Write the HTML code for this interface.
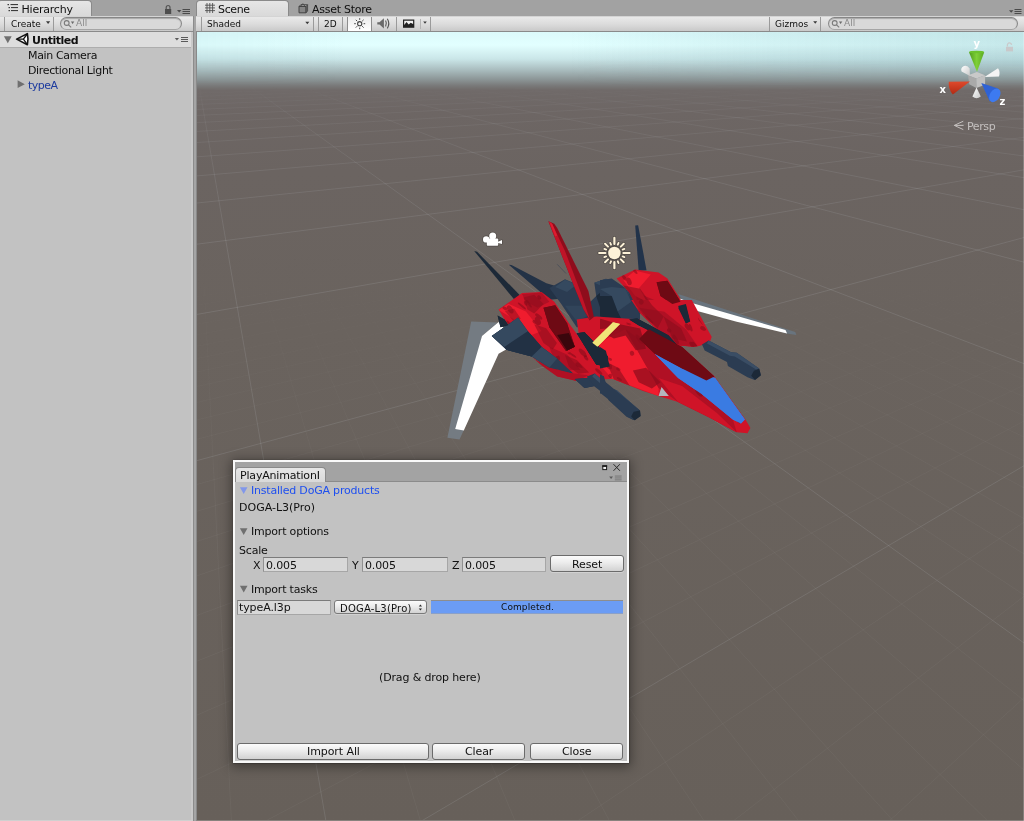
<!DOCTYPE html>
<html><head><meta charset="utf-8"><title>Unity</title>
<style>
*{box-sizing:border-box;margin:0;padding:0}
html,body{width:1024px;height:821px;overflow:hidden;background:#a2a2a2;font-family:"DejaVu Sans","Liberation Sans",sans-serif;font-size:11px;color:#101010}
.abs{position:absolute}
#root{position:absolute;left:0;top:0;width:1024px;height:821px;overflow:hidden;background:#a2a2a2;will-change:transform}
.tab{position:absolute;top:1px;height:16px;background:linear-gradient(#e6e6e6,#d9d9d9);border:1px solid #8a8a8a;border-bottom:none;border-radius:4px 4px 0 0}
.tbar{position:absolute;top:16px;height:16px;background:linear-gradient(#e9e9e9 0,#dcdcdc 50%,#c9c9c9 100%);border-top:1px solid #d4d4d4;border-bottom:1px solid #8a8a8a}
.t{position:absolute;white-space:nowrap;line-height:16px;font-size:11px;letter-spacing:-0.35px}
.s{position:absolute;white-space:nowrap;line-height:12px;font-size:9px;letter-spacing:0}
.sep{position:absolute;top:17px;height:14px;width:1px;background:#9a9a9a}
.search{position:absolute;top:17px;height:13px;border:1px solid #868686;border-bottom-color:#a5a5a5;border-radius:7px;background:#d9d9d9;box-shadow:inset 0 1px 1px #a8a8a8}
.btn{position:absolute;border:1px solid #6b6b6b;border-radius:3px;background:linear-gradient(#fbfbfb 0,#ececec 45%,#d2d2d2 100%);box-shadow:0 1px 0 rgba(255,255,255,.25)}
.fld{position:absolute;height:15px;border:1px solid #a6a6a6;border-top-color:#7b7b7b;border-left-color:#909090;background:#d8d8d8}
</style></head><body><div id="root">

<!-- ===== Hierarchy panel ===== -->
<div class="abs" style="left:0;top:32px;width:193px;height:789px;background:#c2c2c2"></div>
<div class="tab" style="left:-1px;top:0;width:93px;border-top-left-radius:2px"></div>
<span class="t" style="left:21.5px;top:2px;letter-spacing:-0.22px">Hierarchy</span>
<div class="tbar" style="left:0;width:193px"></div>
<div class="sep" style="left:4px"></div><div class="sep" style="left:53px"></div>
<span class="s" style="left:11px;top:18px">Create</span>
<div class="search" style="left:60px;width:122px"></div>
<span class="s" style="left:76px;top:17px;color:#8a8a8a">All</span>
<div class="abs" style="left:0;top:32px;width:193px;height:16px;background:#dddddd;border-bottom:1px solid #adadad"></div>
<span class="t" style="left:32px;top:33px;font-weight:bold;letter-spacing:-0.5px">Untitled</span>
<span class="t" style="left:28px;top:48px">Main Camera</span>
<span class="t" style="left:28px;top:63px">Directional Light</span>
<span class="t" style="left:28px;top:78px;color:#1c3a9e;letter-spacing:-0.5px">typeA</span>

<!-- divider -->
<div class="abs" style="left:191px;top:32px;width:2px;height:789px;background:#c9c9c9"></div>
<div class="abs" style="left:193px;top:0;width:4px;height:821px;background:linear-gradient(90deg,#8c8c8c 0,#8c8c8c 1px,#a5a5a5 1px,#a5a5a5 3px,#898989 3px)"></div>
<div class="abs" style="left:193px;top:0;width:4px;height:16px;background:#a2a2a2"></div>

<!-- ===== Scene panel ===== -->
<div class="tab" style="left:196px;top:0;width:93px"></div>
<span class="t" style="left:218px;top:2px">Scene</span>
<span class="t" style="left:312px;top:2px;letter-spacing:-0.25px">Asset Store</span>
<div class="tbar" style="left:196px;width:828px"></div>
<div class="abs" style="left:348px;top:17px;width:23px;height:14px;background:linear-gradient(#ececec,#ffffff)"></div>
<div class="sep" style="left:201px"></div><div class="sep" style="left:313px"></div><div class="sep" style="left:318px"></div><div class="sep" style="left:342px"></div><div class="sep" style="left:347px;background:#8d8d8d"></div><div class="sep" style="left:371px;background:#8d8d8d"></div><div class="sep" style="left:396px"></div><div class="sep" style="left:420px;background:#b4b4b4;top:19px;height:10px"></div><div class="sep" style="left:430px"></div><div class="sep" style="left:769px"></div><div class="sep" style="left:820px"></div>
<span class="s" style="left:207px;top:18px">Shaded</span>
<span class="s" style="left:324px;top:18px">2D</span>
<span class="s" style="left:775px;top:18px">Gizmos</span>
<div class="search" style="left:828px;width:190px"></div>
<span class="s" style="left:844px;top:17px;color:#8a8a8a">All</span>

<div class="abs" id="scene" style="left:197px;top:32px;width:827px;height:789px;background:linear-gradient(#dcfafb 0,#e2ffff 13px,#cae6e8 27px,#a9bcbe 38px,#8d9798 47px,#787878 54px,#706a69 58px,#6d6664 80px,#6b6461 140px,#6a635e 300px,#67605a 100%)"></div>

<div class="abs" style="left:197px;top:32px;width:827px;height:54px;background:linear-gradient(90deg,rgba(120,170,178,.08) 0,rgba(120,170,178,0) 18%,rgba(120,170,178,0) 45%,rgba(120,170,178,.14) 70%,rgba(120,170,178,.26) 100%);-webkit-mask-image:linear-gradient(#000 0,#000 55%,transparent 100%);mask-image:linear-gradient(#000 0,#000 55%,transparent 100%)"></div>
<svg class="abs" style="left:0;top:0" width="1024" height="821" viewBox="0 0 1024 821">
<defs><linearGradient id="gmg" x1="0" y1="0" x2="0" y2="1"><stop offset="0" stop-color="#000"/><stop offset="0.068" stop-color="#000"/><stop offset="0.1" stop-color="#777"/><stop offset="0.18" stop-color="#ccc"/><stop offset="0.3" stop-color="#fff"/><stop offset="1" stop-color="#fff"/></linearGradient>
<mask id="gm" maskUnits="userSpaceOnUse" x="196" y="32" width="828" height="789"><rect x="196" y="32" width="828" height="789" fill="url(#gmg)"/></mask><linearGradient id="gmg2" x1="0" y1="0" x2="0" y2="1"><stop offset="0" stop-color="#000"/><stop offset="0.27" stop-color="#000"/><stop offset="0.6" stop-color="#fff"/><stop offset="1" stop-color="#fff"/></linearGradient><mask id="gm2" maskUnits="userSpaceOnUse" x="196" y="32" width="828" height="789"><rect x="196" y="32" width="828" height="789" fill="url(#gmg2)"/></mask></defs>
<path d="M201.4 230.0 L231.4 821.0 M246.5 230.0 L420.5 821.0 M269.1 230.0 L515.1 821.0 M291.7 230.0 L609.6 821.0 M314.3 230.0 L704.2 821.0 M336.8 230.0 L798.8 821.0 M359.4 230.0 L893.3 821.0 M382.0 230.0 L987.8 821.0 M404.5 230.0 L1024.0 770.1 M427.1 230.0 L1024.0 700.5 M472.2 230.0 L1024.0 594.9 M494.8 230.0 L1024.0 553.9 M517.4 230.0 L1024.0 518.6 M539.9 230.0 L1024.0 487.8 M562.5 230.0 L1024.0 460.8 M585.0 230.0 L1024.0 437.0 M607.6 230.0 L1024.0 415.7 M630.2 230.0 L1024.0 396.6 M652.7 230.0 L1024.0 379.3 M697.8 230.0 L1024.0 349.5 M720.4 230.0 L1024.0 336.5 M742.9 230.0 L1024.0 324.5 M765.5 230.0 L1024.0 313.5 M788.0 230.0 L1024.0 303.4 M810.6 230.0 L1024.0 293.9 M833.1 230.0 L1024.0 285.2 M855.7 230.0 L1024.0 277.0 M878.2 230.0 L1024.0 269.4 M923.3 230.0 L1024.0 255.5 M945.8 230.0 L1024.0 249.2 M968.4 230.0 L1024.0 243.3 M990.9 230.0 L1024.0 237.7 M1013.5 230.0 L1024.0 232.4 M197.0 234.4 L232.4 230.0 M197.0 239.2 L269.7 230.0 M197.0 249.6 L344.2 230.0 M197.0 255.2 L381.5 230.0 M197.0 261.1 L418.8 230.0 M197.0 267.4 L456.0 230.0 M197.0 274.1 L493.3 230.0 M197.0 281.1 L530.5 230.0 M197.0 288.7 L567.8 230.0 M197.0 296.7 L605.0 230.0 M197.0 305.2 L642.3 230.0 M197.0 324.2 L716.7 230.0 M197.0 334.8 L754.0 230.0 M197.0 346.2 L791.2 230.0 M197.0 358.5 L828.4 230.0 M197.0 371.9 L865.7 230.0 M197.0 386.5 L902.9 230.0 M197.0 402.4 L940.1 230.0 M197.0 419.9 L977.3 230.0 M197.0 439.2 L1014.5 230.0 M197.0 484.5 L1024.0 248.5 M197.0 511.2 L1024.0 260.9 M197.0 541.4 L1024.0 274.9 M197.0 575.8 L1024.0 290.8 M197.0 615.4 L1024.0 309.1 M197.0 661.2 L1024.0 330.4 M197.0 715.1 L1024.0 355.3 M197.0 779.3 L1024.0 385.1 M265.5 821.0 L1024.0 421.1 M577.4 821.0 L1024.0 522.2 M733.3 821.0 L1024.0 596.3 M889.2 821.0 L1024.0 697.7" stroke="#e4ecf2" stroke-opacity="0.045" stroke-width="1" fill="none" mask="url(#gm2)"/><path d="M197.0 85.4 L249.8 84.0 M197.0 87.7 L329.3 84.0 M197.0 90.2 L408.8 84.0 M197.0 93.1 L488.2 84.0 M197.0 96.4 L567.5 84.0 M197.0 100.1 L646.8 84.0 M197.0 104.4 L726.0 84.0 M197.0 109.4 L805.1 84.0 M197.0 115.4 L884.1 84.0 M197.0 122.6 L963.1 84.0 M197.0 131.4 L1024.0 85.0 M197.0 142.5 L1024.0 90.1 M197.0 156.8 L1024.0 96.8 M198.8 84.0 L325.9 821.0 M197.0 175.9 L1024.0 105.6 M246.7 84.0 L1024.0 643.0 M197.0 203.0 L1024.0 118.2 M294.5 84.0 L1024.0 363.7 M197.0 244.2 L1024.0 137.3 M342.4 84.0 L1024.0 262.2 M197.0 314.4 L1024.0 169.8 M390.2 84.0 L1024.0 209.7 M197.0 460.6 L1024.0 237.5 M438.0 84.0 L1024.0 177.7 M421.5 821.0 L1024.0 465.7 M485.8 84.0 L1024.0 156.0 M533.5 84.0 L1024.0 140.5 M581.2 84.0 L1024.0 128.7 M628.9 84.0 L1024.0 119.6 M676.6 84.0 L1024.0 112.2 M724.3 84.0 L1024.0 106.1 M771.9 84.0 L1024.0 101.1 M819.5 84.0 L1024.0 96.8 M867.1 84.0 L1024.0 93.1 M914.7 84.0 L1024.0 89.9 M962.2 84.0 L1024.0 87.2 M1009.7 84.0 L1024.0 84.7" stroke="#e4ecf2" stroke-opacity="0.11" stroke-width="1" fill="none" mask="url(#gm)"/>
<g id="ship">
<polygon points="471.2,321.5 497.6,322.5 482.0,336.1 463.4,430.9 459.5,439.6 447.4,437.7" fill="#747b82"/>
<polygon points="498.6,321.9 504.1,328.3 507.4,348.8 498.6,353.7 463.8,430.5 455.2,428.9 482.0,336.1" fill="#ffffff"/>
<polygon points="678.1,294.0 795.3,332.1 796.3,335.0 786.5,333.4 682.0,299.5" fill="#69747e"/>
<polygon points="678.1,297.9 693.8,303.4 785.5,330.1 787.1,333.4 736.7,321.7 691.8,309.6" fill="#ffffff"/>
<polygon points="474.2,251.0 477.1,251.8 521.6,296.9 519.1,305.3 506.4,290.1" fill="#1c2938"/>
<polygon points="508.8,264.7 511.5,264.9 546.4,283.2 559.1,287.1 567.0,297.9 549.4,299.8" fill="#233246"/>
<polygon points="635.2,225.6 638.1,225.2 646.5,270.2 638.7,270.9" fill="#22334a"/>
<line x1="557.2" y1="264.3" x2="566.0" y2="273.5" stroke="#3a4656" stroke-width="0.6"/>
<polygon points="549.4,288.1 565.0,279.3 576.7,284.2 590.4,301.8 596.2,295.9 594.3,282.7 606.0,278.8 627.5,290.1 640.0,295.9 640.0,327.2 576.7,327.2 561.1,303.8" fill="#2b3c52"/>
<polygon points="594.3,282.7 606.0,278.8 616.8,284.2 606.0,288.1" fill="#35495f"/>
<polygon points="611.9,295.9 627.5,290.1 633.4,307.7 619.7,311.6" fill="#35495f"/>
<polygon points="596.2,295.9 606.0,288.1 611.9,295.9 619.7,311.6 623.6,319.4 602.1,313.5" fill="#1c2938"/>
<polygon points="555.2,287.1 565.0,279.7 576.7,284.6 567.0,292.0" fill="#35495f"/>
<polygon points="565.0,305.7 582.6,305.7 588.4,315.5 576.7,321.3" fill="#31445a"/>
<polygon points="600.0,280.3 611.7,278.4 625.4,288.1 632.2,301.8 640.0,316.4 623.4,323.3 600.0,316.4" fill="#2b3c52"/>
<polygon points="600.0,289.1 611.7,287.1 625.4,288.5 631.2,301.8 617.6,311.6 611.7,295.9" fill="#35495f"/>
<polygon points="600.0,295.9 611.7,295.9 617.6,311.6 623.4,322.9 600.0,316.4" fill="#1c2938"/>
<polygon points="600.0,318.6 625.4,321.9 648.8,329.3 682.0,346.9 714.3,376.2 745.5,419.5 750.4,427.9 747.5,433.2 736.7,432.2 709.4,417.6 678.1,402.0 658.6,396.1 643.0,391.0 611.7,378.5 600.0,376.6" fill="#cf1428"/>
<polygon points="576.7,319.4 596.2,316.4 640.0,319.4 640.0,370.0 588.4,370.0 580.6,346.7" fill="#cf1428"/>
<polygon points="498.6,309.6 522.0,293.0 541.6,292.0 554.3,301.8 568.9,323.3 580.6,338.9 592.3,370.0 533.8,358.4 504.5,319.4" fill="#cf1428"/>
<polygon points="533.8,354.7 549.4,358.6 580.6,348.8 611.9,358.6 611.9,379.1 588.4,380.1 576.7,381.1 557.2,376.2 541.6,364.5" fill="#cf1428"/>
<polygon points="533.8,358.6 549.4,367.4 572.8,373.2 588.4,375.2 576.7,381.1 557.2,376.6 541.6,365.4" fill="#b01024"/>
<polygon points="491.8,336.1 518.1,317.6 527.9,331.2 541.6,346.9 557.2,358.6 572.8,373.2 549.4,367.4 531.8,356.6 506.4,349.8" fill="#2b3c52"/>
<polygon points="491.8,336.1 518.1,317.6 527.9,331.2 504.5,346.9" fill="#35495f"/>
<polygon points="504.5,346.9 527.9,331.2 541.6,346.9 531.8,356.6 506.4,349.8" fill="#223144"/>
<polygon points="531.8,356.6 541.6,346.9 557.2,358.6 549.4,367.4" fill="#35495f"/>
<polygon points="497.6,315.5 504.5,319.4 508.4,325.2 500.5,327.2" fill="#1c2938"/>
<polygon points="629.3,319.5 637.1,318.6 668.4,335.2 678.1,345.9 670.3,341.0 639.1,325.4" fill="#1c2938"/>
<polygon points="576.7,333.2 584.5,332.2 608.0,356.6 606.0,366.4 596.2,364.5" fill="#1c2938"/>
<polygon points="574.8,379.1 588.4,378.1 594.3,385.9 584.5,387.9" fill="#2b3c52"/>
<polygon points="543.5,307.7 555.2,305.3 567.0,323.3 574.8,346.7 566.0,351.0 549.4,327.2" fill="#6e0a14"/>
<polygon points="557.2,335.0 568.9,333.0 574.8,346.7 567.0,350.6" fill="#3a060c"/>
<polygon points="522.0,294.0 541.6,292.4 549.4,301.8 537.7,307.7 525.9,301.8" fill="#b01024"/>
<polygon points="498.6,310.0 508.4,303.8 525.9,311.6 541.6,331.1 531.8,335.0 514.2,319.4" fill="#f01c2e"/>
<polygon points="549.4,346.7 567.0,354.5 580.6,370.0 557.2,370.0" fill="#b01024"/>
<polygon points="548.4,221.3 554.3,223.7 557.2,228.0 588.4,291.1 593.9,317.0 589.6,320.4 583.6,309.6 574.8,288.1" fill="#8e0d1c"/>
<polygon points="548.4,221.3 551.7,222.9 565.0,251.0 580.6,292.0 590.0,319.8 583.6,309.6 574.8,288.1" fill="#c01428"/>
<polygon points="549.4,222.1 552.3,224.1 557.2,235.4 555.2,236.4" fill="#e01c30"/>
<polygon points="616.6,278.4 635.2,269.6 658.6,272.5 667.4,278.4 682.0,301.8 693.8,311.6 711.3,337.0 709.4,343.2 693.8,347.1 678.1,345.2 658.6,331.5 639.1,312.0 629.3,292.4" fill="#cf1428"/>
<polygon points="635.2,292.0 658.6,301.8 682.0,327.2 693.8,346.7 678.1,345.2 658.6,331.5 639.1,312.0" fill="#b01024"/>
<polygon points="656.6,282.3 667.4,280.7 680.5,301.8 672.3,304.1 660.5,295.9" fill="#6e0a14"/>
<polygon points="623.4,280.3 635.2,270.5 650.8,274.5 639.1,288.1 646.9,301.8 635.2,295.9" fill="#f01c2e"/>
<polygon points="678.1,307.7 685.9,305.7 689.8,321.3 685.9,323.3" fill="#1c2938"/>
<polygon points="600.0,342.0 625.4,329.3 658.6,387.9 658.6,396.1 611.7,378.5 600.0,364.8" fill="#f01c2e"/>
<polygon points="639.1,339.1 648.8,329.3 682.0,346.9 714.3,376.6 706.4,380.5 682.0,368.4 654.7,353.7" fill="#6e0a14"/>
<polygon points="625.4,329.3 639.1,339.1 654.7,353.7 678.1,378.1 701.6,394.1 732.8,419.5 736.7,432.2 709.4,417.6 678.1,402.0 658.6,387.9" fill="#b01024"/>
<polygon points="658.6,378.1 682.0,385.9 717.2,413.3 736.7,432.2 709.4,417.6 678.1,402.0" fill="#cf1428"/>
<polygon points="654.7,353.7 682.0,368.4 715.2,378.1 744.9,419.5 741.0,423.4 732.8,419.5 701.6,394.1 678.1,378.1" fill="#3a7be2"/>
<polygon points="661.5,386.9 668.8,396.1 658.6,396.1" fill="#b4b6be"/>
<polygon points="631.2,300.0 691.8,300.0 711.7,337.1 709.4,342.4 697.7,346.3 678.1,345.3 658.6,331.2 639.1,311.7" fill="#cf1428"/>
<polygon points="639.1,307.8 664.5,311.7 685.9,329.3 697.7,346.3 678.1,345.3 658.6,331.2" fill="#b01024"/>
<polygon points="678.1,305.9 685.9,303.9 690.2,321.5 685.9,323.4" fill="#1c2938"/>
<polygon points="629.3,319.5 637.1,318.6 668.4,335.2 678.1,345.9 670.3,341.0 639.1,325.4" fill="#1c2938"/>
<polygon points="576.7,333.2 584.5,332.2 608.0,356.6 606.0,366.4 596.2,364.5" fill="#1c2938"/>
<polygon points="612.9,322.3 620.1,323.9 597.4,346.7 592.3,342.8" fill="#f0e578"/>
<clipPath id="mc0"><polygon points="498.6,309.6 522.0,293.0 541.6,292.0 554.3,301.8 568.9,323.3 580.6,338.9 592.3,370.0 533.8,358.4 504.5,319.4"/></clipPath>
<g clip-path="url(#mc0)" fill="#7a0a18" opacity=".5"><ellipse cx="529.0" cy="303.8" rx="4.6" ry="1.1" transform="rotate(54 529.0 303.8)"/><ellipse cx="507.4" cy="337.4" rx="5.6" ry="1.3" transform="rotate(25 507.4 337.4)"/><ellipse cx="539.2" cy="297.5" rx="2.4" ry="1.7" transform="rotate(56 539.2 297.5)"/><ellipse cx="510.2" cy="309.4" rx="4.5" ry="2.5" transform="rotate(56 510.2 309.4)"/><ellipse cx="553.5" cy="295.9" rx="2.9" ry="1.9" transform="rotate(28 553.5 295.9)"/><ellipse cx="525.7" cy="303.3" rx="2.5" ry="1.5" transform="rotate(63 525.7 303.3)"/><ellipse cx="515.5" cy="337.4" rx="4.6" ry="1.6" transform="rotate(55 515.5 337.4)"/><ellipse cx="565.4" cy="336.0" rx="4.5" ry="1.8" transform="rotate(54 565.4 336.0)"/><ellipse cx="538.7" cy="316.5" rx="4.3" ry="1.7" transform="rotate(39 538.7 316.5)"/><ellipse cx="521.9" cy="306.0" rx="5.1" ry="1.1" transform="rotate(39 521.9 306.0)"/><ellipse cx="547.8" cy="360.2" rx="4.9" ry="1.5" transform="rotate(24 547.8 360.2)"/><ellipse cx="509.7" cy="324.6" rx="5.0" ry="1.2" transform="rotate(51 509.7 324.6)"/><ellipse cx="538.1" cy="367.0" rx="2.3" ry="1.9" transform="rotate(70 538.1 367.0)"/><ellipse cx="580.7" cy="316.5" rx="4.8" ry="2.0" transform="rotate(57 580.7 316.5)"/><ellipse cx="573.3" cy="297.4" rx="2.4" ry="1.4" transform="rotate(64 573.3 297.4)"/><ellipse cx="560.9" cy="296.8" rx="4.8" ry="2.0" transform="rotate(63 560.9 296.8)"/><ellipse cx="575.6" cy="314.2" rx="3.5" ry="2.1" transform="rotate(21 575.6 314.2)"/><ellipse cx="586.8" cy="319.7" rx="4.4" ry="1.8" transform="rotate(33 586.8 319.7)"/><ellipse cx="570.6" cy="302.1" rx="3.0" ry="1.6" transform="rotate(51 570.6 302.1)"/><ellipse cx="506.1" cy="327.0" rx="4.2" ry="2.4" transform="rotate(47 506.1 327.0)"/><ellipse cx="579.6" cy="313.7" rx="3.7" ry="1.6" transform="rotate(44 579.6 313.7)"/><ellipse cx="588.4" cy="303.8" rx="2.7" ry="1.4" transform="rotate(34 588.4 303.8)"/><ellipse cx="499.7" cy="356.8" rx="2.7" ry="1.5" transform="rotate(29 499.7 356.8)"/><ellipse cx="537.9" cy="320.8" rx="4.3" ry="2.5" transform="rotate(64 537.9 320.8)"/><ellipse cx="579.1" cy="366.1" rx="4.6" ry="2.2" transform="rotate(49 579.1 366.1)"/><ellipse cx="582.9" cy="352.8" rx="5.5" ry="2.3" transform="rotate(45 582.9 352.8)"/><ellipse cx="535.9" cy="322.7" rx="3.9" ry="1.6" transform="rotate(32 535.9 322.7)"/><ellipse cx="504.9" cy="308.3" rx="2.6" ry="1.5" transform="rotate(23 504.9 308.3)"/></g>
<clipPath id="mc1"><polygon points="616.6,278.4 635.2,269.6 658.6,272.5 667.4,278.4 682.0,301.8 693.8,311.6 711.3,337.0 709.4,343.2 693.8,347.1 678.1,345.2 658.6,331.5 639.1,312.0 629.3,292.4"/></clipPath>
<g clip-path="url(#mc1)" fill="#7a0a18" opacity=".5"><ellipse cx="626.3" cy="313.5" rx="4.1" ry="2.5" transform="rotate(59 626.3 313.5)"/><ellipse cx="619.0" cy="337.4" rx="4.5" ry="1.2" transform="rotate(36 619.0 337.4)"/><ellipse cx="707.1" cy="316.3" rx="3.9" ry="1.2" transform="rotate(51 707.1 316.3)"/><ellipse cx="710.7" cy="305.7" rx="3.9" ry="1.1" transform="rotate(26 710.7 305.7)"/><ellipse cx="687.6" cy="327.0" rx="3.9" ry="2.1" transform="rotate(53 687.6 327.0)"/><ellipse cx="618.8" cy="343.3" rx="4.1" ry="1.2" transform="rotate(54 618.8 343.3)"/><ellipse cx="703.2" cy="328.4" rx="3.2" ry="2.0" transform="rotate(25 703.2 328.4)"/><ellipse cx="682.5" cy="289.8" rx="3.5" ry="1.3" transform="rotate(69 682.5 289.8)"/><ellipse cx="637.7" cy="311.6" rx="4.0" ry="2.0" transform="rotate(59 637.7 311.6)"/><ellipse cx="693.5" cy="345.9" rx="5.4" ry="2.3" transform="rotate(45 693.5 345.9)"/><ellipse cx="686.7" cy="287.2" rx="4.1" ry="1.6" transform="rotate(21 686.7 287.2)"/><ellipse cx="710.3" cy="330.8" rx="3.9" ry="1.3" transform="rotate(58 710.3 330.8)"/><ellipse cx="707.2" cy="304.2" rx="5.7" ry="2.6" transform="rotate(43 707.2 304.2)"/><ellipse cx="624.2" cy="277.5" rx="3.9" ry="1.5" transform="rotate(50 624.2 277.5)"/><ellipse cx="675.7" cy="339.4" rx="5.4" ry="1.8" transform="rotate(61 675.7 339.4)"/><ellipse cx="649.2" cy="319.4" rx="5.3" ry="1.2" transform="rotate(44 649.2 319.4)"/><ellipse cx="690.7" cy="327.7" rx="3.9" ry="1.3" transform="rotate(70 690.7 327.7)"/><ellipse cx="676.8" cy="276.3" rx="5.8" ry="2.2" transform="rotate(49 676.8 276.3)"/><ellipse cx="654.6" cy="343.0" rx="4.9" ry="1.3" transform="rotate(28 654.6 343.0)"/><ellipse cx="619.2" cy="315.4" rx="3.9" ry="2.0" transform="rotate(59 619.2 315.4)"/><ellipse cx="694.9" cy="345.6" rx="4.6" ry="1.6" transform="rotate(55 694.9 345.6)"/><ellipse cx="668.5" cy="271.2" rx="5.2" ry="2.2" transform="rotate(26 668.5 271.2)"/><ellipse cx="666.5" cy="342.0" rx="3.7" ry="2.4" transform="rotate(33 666.5 342.0)"/><ellipse cx="619.3" cy="286.1" rx="4.0" ry="2.2" transform="rotate(40 619.3 286.1)"/><ellipse cx="641.2" cy="302.1" rx="2.5" ry="2.5" transform="rotate(42 641.2 302.1)"/><ellipse cx="701.6" cy="320.9" rx="5.3" ry="1.8" transform="rotate(52 701.6 320.9)"/><ellipse cx="629.0" cy="281.3" rx="4.0" ry="2.4" transform="rotate(69 629.0 281.3)"/><ellipse cx="633.9" cy="269.9" rx="5.2" ry="1.3" transform="rotate(50 633.9 269.9)"/><ellipse cx="675.2" cy="278.9" rx="2.2" ry="2.1" transform="rotate(53 675.2 278.9)"/><ellipse cx="669.2" cy="330.4" rx="2.4" ry="1.9" transform="rotate(35 669.2 330.4)"/></g>
<clipPath id="mc2"><polygon points="600.0,318.6 625.4,321.9 648.8,329.3 682.0,346.9 714.3,376.2 745.5,419.5 750.4,427.9 747.5,433.2 736.7,432.2 709.4,417.6 678.1,402.0 658.6,396.1 643.0,391.0 611.7,378.5 600.0,376.6"/></clipPath>
<g clip-path="url(#mc2)" fill="#7a0a18" opacity=".5"><ellipse cx="628.8" cy="323.4" rx="2.4" ry="1.7" transform="rotate(21 628.8 323.4)"/><ellipse cx="714.3" cy="423.2" rx="3.8" ry="2.0" transform="rotate(52 714.3 423.2)"/><ellipse cx="691.2" cy="341.4" rx="3.1" ry="1.8" transform="rotate(50 691.2 341.4)"/><ellipse cx="676.4" cy="346.9" rx="4.1" ry="2.4" transform="rotate(36 676.4 346.9)"/><ellipse cx="738.8" cy="420.9" rx="2.8" ry="1.7" transform="rotate(46 738.8 420.9)"/><ellipse cx="618.3" cy="369.2" rx="2.3" ry="1.4" transform="rotate(24 618.3 369.2)"/><ellipse cx="632.0" cy="353.3" rx="2.5" ry="2.2" transform="rotate(65 632.0 353.3)"/><ellipse cx="696.8" cy="360.5" rx="3.0" ry="1.2" transform="rotate(49 696.8 360.5)"/><ellipse cx="633.0" cy="427.8" rx="3.6" ry="1.8" transform="rotate(62 633.0 427.8)"/><ellipse cx="725.2" cy="337.1" rx="3.7" ry="1.8" transform="rotate(41 725.2 337.1)"/><ellipse cx="663.4" cy="359.4" rx="2.4" ry="1.6" transform="rotate(41 663.4 359.4)"/><ellipse cx="683.3" cy="369.1" rx="2.1" ry="1.5" transform="rotate(59 683.3 369.1)"/><ellipse cx="644.4" cy="428.7" rx="2.5" ry="2.5" transform="rotate(34 644.4 428.7)"/><ellipse cx="746.1" cy="330.6" rx="3.1" ry="1.1" transform="rotate(69 746.1 330.6)"/><ellipse cx="627.3" cy="405.2" rx="5.3" ry="2.4" transform="rotate(63 627.3 405.2)"/><ellipse cx="723.2" cy="348.2" rx="2.6" ry="2.5" transform="rotate(56 723.2 348.2)"/><ellipse cx="674.4" cy="356.1" rx="3.1" ry="2.3" transform="rotate(31 674.4 356.1)"/><ellipse cx="664.0" cy="326.9" rx="5.8" ry="2.0" transform="rotate(36 664.0 326.9)"/><ellipse cx="612.6" cy="416.7" rx="2.3" ry="2.4" transform="rotate(49 612.6 416.7)"/><ellipse cx="601.7" cy="432.6" rx="3.7" ry="2.5" transform="rotate(59 601.7 432.6)"/><ellipse cx="619.4" cy="379.0" rx="3.0" ry="1.2" transform="rotate(30 619.4 379.0)"/><ellipse cx="639.4" cy="339.3" rx="5.7" ry="2.0" transform="rotate(53 639.4 339.3)"/><ellipse cx="714.2" cy="351.8" rx="4.0" ry="1.3" transform="rotate(42 714.2 351.8)"/><ellipse cx="720.9" cy="432.6" rx="2.1" ry="1.0" transform="rotate(52 720.9 432.6)"/><ellipse cx="682.9" cy="340.3" rx="3.9" ry="2.5" transform="rotate(26 682.9 340.3)"/><ellipse cx="699.0" cy="393.1" rx="4.6" ry="1.9" transform="rotate(45 699.0 393.1)"/></g>
<clipPath id="mc3"><polygon points="533.8,354.7 549.4,358.6 580.6,348.8 611.9,358.6 611.9,379.1 588.4,380.1 576.7,381.1 557.2,376.2 541.6,364.5"/></clipPath>
<g clip-path="url(#mc3)" fill="#7a0a18" opacity=".5"><ellipse cx="609.6" cy="358.7" rx="2.9" ry="1.4" transform="rotate(32 609.6 358.7)"/><ellipse cx="598.8" cy="371.6" rx="4.5" ry="1.6" transform="rotate(42 598.8 371.6)"/><ellipse cx="610.5" cy="375.8" rx="2.1" ry="2.0" transform="rotate(36 610.5 375.8)"/><ellipse cx="567.4" cy="350.6" rx="4.7" ry="1.6" transform="rotate(52 567.4 350.6)"/><ellipse cx="586.1" cy="357.9" rx="3.0" ry="1.5" transform="rotate(49 586.1 357.9)"/><ellipse cx="548.2" cy="357.5" rx="2.0" ry="1.6" transform="rotate(41 548.2 357.5)"/><ellipse cx="609.7" cy="366.5" rx="3.0" ry="2.5" transform="rotate(39 609.7 366.5)"/><ellipse cx="550.8" cy="354.7" rx="3.3" ry="1.1" transform="rotate(37 550.8 354.7)"/><ellipse cx="573.0" cy="355.3" rx="4.0" ry="1.0" transform="rotate(36 573.0 355.3)"/><ellipse cx="597.6" cy="353.5" rx="4.3" ry="1.6" transform="rotate(39 597.6 353.5)"/><ellipse cx="557.5" cy="356.3" rx="4.3" ry="1.8" transform="rotate(68 557.5 356.3)"/><ellipse cx="545.9" cy="377.6" rx="5.1" ry="2.0" transform="rotate(68 545.9 377.6)"/><ellipse cx="559.2" cy="380.6" rx="2.6" ry="2.2" transform="rotate(61 559.2 380.6)"/><ellipse cx="545.1" cy="375.4" rx="4.9" ry="1.8" transform="rotate(47 545.1 375.4)"/></g>
<clipPath id="mcall"><polygon points="498.6,309.6 522.0,293.0 541.6,292.0 554.3,301.8 568.9,323.3 580.6,338.9 592.3,370.0 533.8,358.4 504.5,319.4"/><polygon points="616.6,278.4 635.2,269.6 658.6,272.5 667.4,278.4 682.0,301.8 693.8,311.6 711.3,337.0 709.4,343.2 693.8,347.1 678.1,345.2 658.6,331.5 639.1,312.0 629.3,292.4"/><polygon points="600.0,318.6 625.4,321.9 648.8,329.3 682.0,346.9 714.3,376.2 745.5,419.5 750.4,427.9 747.5,433.2 736.7,432.2 709.4,417.6 678.1,402.0 658.6,396.1 643.0,391.0 611.7,378.5 600.0,376.6"/><polygon points="533.8,354.7 549.4,358.6 580.6,348.8 611.9,358.6 611.9,379.1 588.4,380.1 576.7,381.1 557.2,376.2 541.6,364.5"/></clipPath><g clip-path="url(#mcall)"><polygon points="578.8,322.4 599.2,318.3 613.9,322.7 606.5,328.5 587.5,330.0" fill="#8a0d1c" opacity=".8"/>
<polygon points="619.7,324.2 640.2,328.5 646.0,348.7 635.8,350.2 625.6,335.6 613.9,338.5 608.3,335.6" fill="#8a0d1c" opacity=".8"/>
<polygon points="632.9,370.6 646.0,367.7 660.6,382.3 651.9,388.5 638.7,382.3" fill="#8a0d1c" opacity=".7"/>
<polygon points="618.2,284.4 640.2,288.8 651.9,304.9 663.6,316.5 657.7,328.2 643.1,315.1 631.4,299.0" fill="#8a0d1c" opacity=".6"/>
<polygon points="663.6,316.5 681.1,328.2 687.0,341.4 672.3,338.5" fill="#8a0d1c" opacity=".6"/>
<polygon points="606.5,361.9 618.2,367.7 631.4,388.2 625.6,391.1 613.9,379.4" fill="#8a0d1c" opacity=".6"/>
<polygon points="523.5,297.4 534.2,294.7 543.5,304.1 534.2,313.5 527.5,309.5" fill="#8a0d1c" opacity=".55"/>
<polygon points="534.2,324.2 546.2,328.2 556.9,342.9 552.9,349.6 543.5,342.9" fill="#8a0d1c" opacity=".55"/>
<polygon points="565.0,355.0 577.0,360.3 589.1,372.4 578.4,373.7 569.0,367.0" fill="#8a0d1c" opacity=".55"/>
<polygon points="504.7,310.8 514.1,308.8 520.8,318.8 512.8,320.2" fill="#8a0d1c" opacity=".5"/></g>
<polygon points="491.8,336.1 518.1,317.6 527.9,331.2 541.6,346.9 557.2,358.6 572.8,373.2 549.4,367.4 531.8,356.6 506.4,349.8" fill="#2b3c52"/>
<polygon points="491.8,336.1 518.1,317.6 527.9,331.2 504.5,346.9" fill="#35495f"/>
<polygon points="504.5,346.9 527.9,331.2 541.6,346.9 531.8,356.6 506.4,349.8" fill="#223144"/>
<polygon points="531.8,356.6 541.6,346.9 557.2,358.6 549.4,367.4" fill="#35495f"/>
<polygon points="497.6,315.5 504.5,319.4 508.4,325.2 500.5,327.2" fill="#1c2938"/>
<polygon points="629.3,319.5 637.1,318.6 668.4,335.2 678.1,345.9 670.3,341.0 639.1,325.4" fill="#1c2938"/>
<polygon points="576.7,333.2 584.5,332.2 608.0,356.6 606.0,366.4 596.2,364.5" fill="#1c2938"/>
<polygon points="574.8,379.1 588.4,378.1 594.3,385.9 584.5,387.9" fill="#2b3c52"/>
<polygon points="654.7,353.7 682.0,368.4 715.2,378.1 744.9,419.5 741.0,423.4 732.8,419.5 701.6,394.1 678.1,378.1" fill="#3a7be2"/>
<polygon points="639.1,339.1 648.8,329.3 682.0,346.9 714.3,376.6 706.4,380.5 682.0,368.4 654.7,353.7" fill="#6e0a14"/>
<polygon points="543.5,307.7 555.2,305.3 567.0,323.3 574.8,346.7 566.0,351.0 549.4,327.2" fill="#6e0a14"/>
<polygon points="557.2,335.0 568.9,333.0 574.8,346.7 567.0,350.6" fill="#3a060c"/>
<polygon points="656.6,282.3 667.4,280.7 680.5,301.8 672.3,304.1 660.5,295.9" fill="#6e0a14"/>
<polygon points="678.1,307.7 685.9,305.7 689.8,321.3 685.9,323.3" fill="#1c2938"/>
<polygon points="612.9,322.3 620.1,323.9 597.4,346.7 592.3,342.8" fill="#f0e578"/>
<polygon points="702.0,344.5 708.6,340.6 731.2,352.3 736.7,352.7 759.2,368.4 760.9,375.2 754.7,380.1 747.5,377.3 727.9,366.0 727.0,362.1 704.7,350.4" fill="#2b3c52"/>
<polygon points="708.6,340.6 731.2,352.3 736.7,352.7 759.2,368.4 756.2,369.5 734.8,356.6 729.9,355.7 707.0,343.4" fill="#3a4d64"/>
<polygon points="753.9,370.7 759.2,368.8 760.9,375.2 755.1,379.9 751.2,375.8" fill="#1c2938"/>
<polygon points="586.9,376.6 594.7,373.4 612.9,388.9 616.8,390.2 638.6,409.4 640.0,415.6 633.4,420.1 626.5,416.8 608.4,400.0 607.6,396.7 590.0,383.0" fill="#2b3c52"/>
<polygon points="594.7,373.4 612.9,388.9 616.8,390.2 638.6,409.4 635.3,410.5 614.8,393.4 610.3,391.8 592.3,376.6" fill="#3a4d64"/>
<polygon points="632.2,411.3 638.6,409.4 640.0,415.6 633.8,420.1 629.8,416.0" fill="#1c2938"/>
<polygon points="574.8,379.1 588.4,378.1 594.3,385.9 584.5,387.9" fill="#2b3c52"/>
<polygon points="600.0,374.2 603.9,376.2 607.8,389.8 600.0,393.8" fill="#2b3c52"/>
<polygon points="600.0,379.1 604.9,381.6 640.0,410.5 640.6,416.0 634.4,420.3 628.9,417.6 609.8,400.6 600.0,392.8" fill="#2b3c52"/>
<polygon points="633.6,411.7 640.0,410.5 640.6,416.0 634.8,420.3 631.2,416.4" fill="#1c2938"/>
<polygon points="600.0,346.9 605.9,350.8 609.8,366.4 600.0,368.4" fill="#1c2938"/>
</g>
<defs>
<linearGradient id="gcn" x1="0" y1="0" x2="1" y2="0"><stop offset="0" stop-color="#4f9c1c"/><stop offset=".5" stop-color="#7fd038"/><stop offset="1" stop-color="#5aa824"/></linearGradient>
<linearGradient id="rcn" x1="0" y1="0" x2="0" y2="1"><stop offset="0" stop-color="#e04a2c"/><stop offset="1" stop-color="#b02a14"/></linearGradient>
<linearGradient id="wcn" x1="0" y1="0" x2="1" y2="1"><stop offset="0" stop-color="#ffffff"/><stop offset="1" stop-color="#c9c9c9"/></linearGradient>
</defs>
<g id="gizmo">
<!-- white cones behind -->
<path d="M970 76L961.6 71.6q-1.4-4 2.4-5.6q3.6-1 5.6 2.6z" fill="url(#wcn)"/>
<path d="M984.5 77L998 68.2q2.6 3.6 1 8.4z" fill="#f4f4f4"/>
<!-- cube -->
<path d="M968 75.3L976.9 72.1L985.1 75.3L976.3 78.5z" fill="#c9c9c9"/>
<path d="M968 75.3L976.3 78.5V88L969.3 84.2z" fill="#a9a9a9"/>
<path d="M976.3 78.5L985.1 75.3V84.8L976.3 88z" fill="#c0c0c0"/>
<!-- green cone -->
<path d="M969 52.2q7.6-2.4 15.2 0L977 71.8z" fill="url(#gcn)"/><ellipse cx="976.6" cy="52" rx="7.6" ry="1.3" fill="#6cc22c"/>
<!-- red cone -->
<path d="M970 81.4L948.8 81.8q-0.8 7 4 12.8z" fill="url(#rcn)"/>
<!-- bottom white cone -->
<path d="M976.5 87.5L972.4 96.5q4.2 3.4 8.4 0z" fill="url(#wcn)"/>
<!-- blue cone -->
<path d="M981.3 83.1L998 88.5L989.8 101.5z" fill="#2f62d4"/>
<ellipse cx="994.8" cy="95.3" rx="5" ry="7.4" transform="rotate(32 994.8 95.3)" fill="#3d7af0"/>
</g>
<!-- scene lock -->
<g opacity=".75"><path d="M1007.4 46.4v-1.2a2.1 2.1 0 0 1 4.2 -0.3" fill="none" stroke="#cbbfc0" stroke-width="1.2"/><rect x="1006" y="46.8" width="7" height="4.6" fill="#cbbfc0"/></g>
<!-- persp icon -->
<g stroke="#c4c0bf" stroke-width="1" fill="none"><path d="M963.3 121.2L954.3 125.4L963.3 129.6M954.3 125.4H963.6"/></g>
<!-- camera gizmo -->
<g fill="#4a4540" stroke="#4a4540" stroke-width="1.4" stroke-linejoin="round" opacity=".75"><circle cx="486.2" cy="239.4" r="3.2"/><circle cx="492.7" cy="235.9" r="3.5"/><rect x="486.8" y="238.5" width="11.4" height="7.3" rx=".8"/><path d="M498 241.7l4-1.6v3.8l-4-.8z"/></g><g fill="#ffffff"><circle cx="486.2" cy="239.4" r="3.2"/><circle cx="492.7" cy="235.9" r="3.5"/><rect x="486.8" y="238.5" width="11.4" height="7.3" rx=".8"/><path d="M498 241.7l4-1.6v3.8l-4-.8z"/></g>
<!-- light gizmo -->
<g stroke-linecap="round"><g fill="#4a4540" stroke="#4a4540" opacity=".8" transform="translate(0,0)"><circle cx="614.4" cy="253.0" r="7"/><path d="M623.4 253.0L629.6 253.0M614.4 262.0L614.4 268.2M605.4 253.0L599.2 253.0M614.4 244.0L614.4 237.8" stroke-width="3.6"/><path d="M620.8 259.4L623.7 262.3M608.0 259.4L605.1 262.3M608.0 246.6L605.1 243.7M620.8 246.6L623.7 243.7" stroke-width="3.4"/><path d="M622.7 256.4L624.4 257.1M617.8 261.3L618.5 263.0M611.0 261.3L610.3 263.0M606.1 256.4L604.4 257.1M606.1 249.6L604.4 248.9M611.0 244.7L610.3 243.0M617.8 244.7L618.5 243.0M622.7 249.6L624.4 248.9" stroke-width="3.3"/></g><g fill="#fdf2d8" stroke="#fdf2d8"><circle cx="614.4" cy="253.0" r="6.2" stroke="none"/><path d="M623.4 253.0L629.6 253.0M614.4 262.0L614.4 268.2M605.4 253.0L599.2 253.0M614.4 244.0L614.4 237.8" stroke-width="2.2"/><path d="M620.8 259.4L623.7 262.3M608.0 259.4L605.1 262.3M608.0 246.6L605.1 243.7M620.8 246.6L623.7 243.7" stroke-width="2"/><path d="M622.7 256.4L624.4 257.1M617.8 261.3L618.5 263.0M611.0 261.3L610.3 263.0M606.1 256.4L604.4 257.1M606.1 249.6L604.4 248.9M611.0 244.7L610.3 243.0M617.8 244.7L618.5 243.0M622.7 249.6L624.4 248.9" stroke-width="1.9"/></g></g>

</svg>
<span class="t" style="left:973.5px;top:36px;color:#fff;font-weight:bold;font-size:10px">y</span><span class="t" style="left:939.5px;top:82px;color:#fff;font-weight:bold;font-size:10px">x</span><span class="t" style="left:999.5px;top:94px;color:#fff;font-weight:bold;font-size:10px">z</span>
<span class="t" style="left:967px;top:119px;color:#c4c0bf;letter-spacing:-0.4px">Persp</span>

<div class="abs" style="left:0;top:820px;width:193px;height:1px;background:#d0d0d0"></div><div class="abs" style="left:197px;top:820px;width:827px;height:1px;background:#87827d"></div>
<div class="abs" style="left:1023px;top:32px;width:1px;height:789px;background:rgba(255,255,255,.2)"></div>
<!-- ===== dialog ===== -->
<div class="abs" id="dlg" style="left:233px;top:460px;width:396px;height:303px;background:#c2c2c2;border:2px solid #f9f9f9;box-shadow:0 0 1.5px .5px rgba(0,0,0,.55),0 2px 11px 2px rgba(0,0,0,.38)"></div>
<div class="abs" style="left:235px;top:462px;width:392px;height:20px;background:#a3a3a3;border-bottom:1px solid #8b8b8b"></div>
<div class="tab" style="left:235px;top:467px;width:91px;height:15px"></div>
<span class="t" style="left:240px;top:468px;letter-spacing:-0.18px">PlayAnimationI</span>
<span class="t" style="left:251px;top:483px;color:#1e4ff0;letter-spacing:-0.2px">Installed DoGA products</span>
<span class="t" style="left:239px;top:500px;letter-spacing:0">DOGA-L3(Pro)</span>
<span class="t" style="left:251px;top:524px;letter-spacing:-0.2px">Import options</span>
<span class="t" style="left:239px;top:543px;letter-spacing:-0.2px">Scale</span>
<span class="t" style="left:253px;top:558px">X</span>
<div class="fld" style="left:263px;top:557px;width:85px"></div><span class="t" style="left:266px;top:558px;letter-spacing:-0.15px">0.005</span>
<span class="t" style="left:352px;top:558px">Y</span>
<div class="fld" style="left:362px;top:557px;width:86px"></div><span class="t" style="left:365px;top:558px;letter-spacing:-0.15px">0.005</span>
<span class="t" style="left:452px;top:558px">Z</span>
<div class="fld" style="left:462px;top:557px;width:84px"></div><span class="t" style="left:465px;top:558px;letter-spacing:-0.15px">0.005</span>
<div class="btn" style="left:550px;top:555px;width:74px;height:17px"></div>
<span class="t" style="left:572px;top:557px;letter-spacing:-0.1px">Reset</span>
<span class="t" style="left:251px;top:582px;letter-spacing:-0.2px">Import tasks</span>
<div class="fld" style="left:237px;top:600px;width:94px;height:15px"></div><span class="t" style="left:239px;top:600px;letter-spacing:-0.1px">typeA.l3p</span>
<div class="btn" style="left:334px;top:600px;width:93px;height:14px;border-color:#7a7a7a"></div>
<span class="t" style="left:340px;top:601px;font-size:10px;letter-spacing:0.2px">DOGA-L3(Pro)</span>
<div class="abs" style="left:431px;top:600px;width:192px;height:14px;background:#6b9cf4;border-top:1px solid #8d8d8d;border-bottom:1px solid #8aa0c8"></div>
<span class="s" style="left:501px;top:601px;letter-spacing:0.1px">Completed.</span>
<span class="t" style="left:379px;top:670px;letter-spacing:-0.14px">(Drag &amp; drop here)</span>
<div class="btn" style="left:237px;top:743px;width:192px;height:17px"></div><span class="t" style="left:307px;top:744px;letter-spacing:-0.08px">Import All</span>
<div class="btn" style="left:432px;top:743px;width:93px;height:17px"></div><span class="t" style="left:465px;top:744px;letter-spacing:-0.1px">Clear</span>
<div class="btn" style="left:530px;top:743px;width:93px;height:17px"></div><span class="t" style="left:562px;top:744px;letter-spacing:-0.1px">Close</span>

<svg class="abs" style="left:0;top:0" width="1024" height="821" viewBox="0 0 1024 821">
<!-- hierarchy tab list icon -->
<g fill="#3c3c3c"><rect x="7.5" y="4" width="1.5" height="1.2"/><rect x="8.5" y="7" width="1.5" height="1.2"/><rect x="8.5" y="10" width="1.5" height="1.2"/>
<rect x="10.5" y="4" width="7.5" height="1.1"/><rect x="11" y="7" width="7" height="1.1"/><rect x="11" y="10" width="7" height="1.1"/></g>
<!-- lock icon -->
<g><path d="M166.2 9.5V7.6a1.9 2.1 0 0 1 3.8 0V9.5" fill="none" stroke="#555" stroke-width="1.2"/><rect x="165" y="9" width="6.2" height="5" fill="#4d4d4d"/></g>
<!-- pane menu icons -->
<g fill="#4a4a4a"><path d="M177 10h4.4l-2.2 2.6z"/><rect x="182.5" y="9" width="7.5" height="1"/><rect x="182.5" y="11" width="7.5" height="1"/><rect x="182.5" y="13" width="7.5" height="1"/></g>
<g fill="#5a5a5a"><path d="M174.8 38h4.2l-2.1 2.4z"/><rect x="181" y="37" width="7" height="1"/><rect x="181" y="39" width="7" height="1"/><rect x="181" y="41" width="7" height="1"/></g>
<g fill="#4a4a4a"><path d="M1009 10.2h4.4l-2.2 2.6z"/><rect x="1014.5" y="9" width="7" height="1"/><rect x="1014.5" y="11" width="7" height="1"/><rect x="1014.5" y="13" width="7" height="1"/></g>
<!-- create arrow -->
<path d="M46 21.3h4.2l-2.1 2.6z" fill="#3a3a3a"/>
<!-- search icons -->
<g stroke="#7a7a7a" fill="none" stroke-width="1.1"><circle cx="66.7" cy="23" r="2.4"/><path d="M68.5 24.8L71.2 27.4"/></g><path d="M70.9 21.6h3.4l-1.7 2.3z" fill="#6a6a6a"/>
<g stroke="#7a7a7a" fill="none" stroke-width="1.1"><circle cx="834.7" cy="23" r="2.4"/><path d="M836.5 24.8L839.2 27.4"/></g><path d="M838.9 21.6h3.4l-1.7 2.3z" fill="#6a6a6a"/>
<!-- scene row foldout + unity logo -->
<path d="M3.9 36.3h7.8l-3.9 7z" fill="#6f6f6f"/>
<g><path d="M16.6 39.1L27.4 33.6Q28.6 39.1 27.4 44.7z" fill="#fff" stroke="#111" stroke-width="1.6" stroke-linejoin="round"/><path d="M23.4 39.1H17M23.4 39.1L27.2 34M23.4 39.1L27.2 44.4" stroke="#111" stroke-width="1.3" fill="none"/></g>
<!-- typeA arrow -->
<path d="M17.6 80.3v7.7l7.2-3.85z" fill="#6f6f6f"/>
<!-- scene tab icon -->
<g stroke="#4a4a4a" stroke-width="1" opacity=".85"><path d="M207 3v10M209.8 3v10M212.6 3v10M205 5.2h10M205 7.9h10M205 10.6h10" fill="none"/></g>
<!-- asset store icon -->
<g><path d="M299 6.5h7v6.3h-7z" fill="#858585" stroke="#444" stroke-width="1"/><path d="M306 6.5l1.6-1.8v6.2l-1.6 1.9z" fill="#666" stroke="#444" stroke-width=".8"/><path d="M299 6.5l1.8-1.8h6.8" fill="none" stroke="#444" stroke-width=".9"/><path d="M301 6.5c0-3.2 3.6-3.2 3.6 0" fill="none" stroke="#444" stroke-width="1"/></g>
<!-- shaded arrow -->
<path d="M305.3 21.8h4l-2 2.5z" fill="#3a3a3a"/>
<!-- gizmos arrow -->
<path d="M813.2 21.3h4l-2 2.5z" fill="#3a3a3a"/>
<!-- sun toolbar icon -->
<g stroke="#444" fill="none"><circle cx="359.7" cy="23.7" r="2.1" stroke-width="1.1"/>
<path d="M359.7 18.2v1.6M359.7 27.6v1.6M354.2 23.7h1.6M363.6 23.7h1.6M355.8 19.8l1.4 1.4M362.2 26.2l1.4 1.4M363.6 19.8l-1.4 1.4M357.2 26.2l-1.4 1.4" stroke-width="1"/></g>
<!-- speaker -->
<g><path d="M377.3 22.2h2.2l4.4-3.9v10.2l-4.4-3.9h-2.2z" fill="#6a6a6a"/><path d="M385.6 20.6q1.6 2.9 0 5.8M387.3 18.8q3 4.7 0 9.6" stroke="#555" stroke-width="1.1" fill="none"/></g>
<!-- image icon -->
<g><rect x="403" y="19.5" width="11.3" height="8.3" fill="#222"/><path d="M404.2 20.7h8.9v3.2l-2.4 -1.2-2 1.8-2.2-2.6-2.3 3.2z" fill="#f2f2f2"/></g>
<path d="M423.2 21.5h3.6l-1.8 2.3z" fill="#3a3a3a"/>
<!-- dialog foldouts -->
<path d="M239.9 487.3h7.6l-3.8 6.8z" fill="#8197ea"/>
<path d="M239.9 528.2h7.6l-3.8 6.8z" fill="#6f6f6f"/>
<path d="M239.9 585.8h7.6l-3.8 6.8z" fill="#6f6f6f"/>
<!-- dialog window buttons -->
<rect x="602.8" y="465.8" width="3.8" height="3.8" fill="#f0f0f0" stroke="#1a1a1a" stroke-width="1"/><rect x="602.3" y="465.3" width="4.8" height="1.6" fill="#1a1a1a"/>
<path d="M613.5 464.2l6.4 6.6M619.9 464.2l-6.4 6.6" stroke="#2a2a2a" stroke-width="1" fill="none"/>
<g fill="#5c5c5c"><path d="M609.2 476.6h3.8l-1.9 2.3z"/><rect x="614.8" y="475.5" width="6.8" height="1.1" fill="#7c7c7c"/><rect x="614.8" y="477.4" width="6.8" height="1.1" fill="#7c7c7c"/><rect x="614.8" y="479.3" width="6.8" height="1.1" fill="#7c7c7c"/></g>
<!-- popup arrows -->
<path d="M418.8 606.6l1.6-2.2l1.6 2.2zM418.8 608.4l1.6 2.2l1.6-2.2z" fill="#2a2a2a"/>

</svg>
</div></body></html>
